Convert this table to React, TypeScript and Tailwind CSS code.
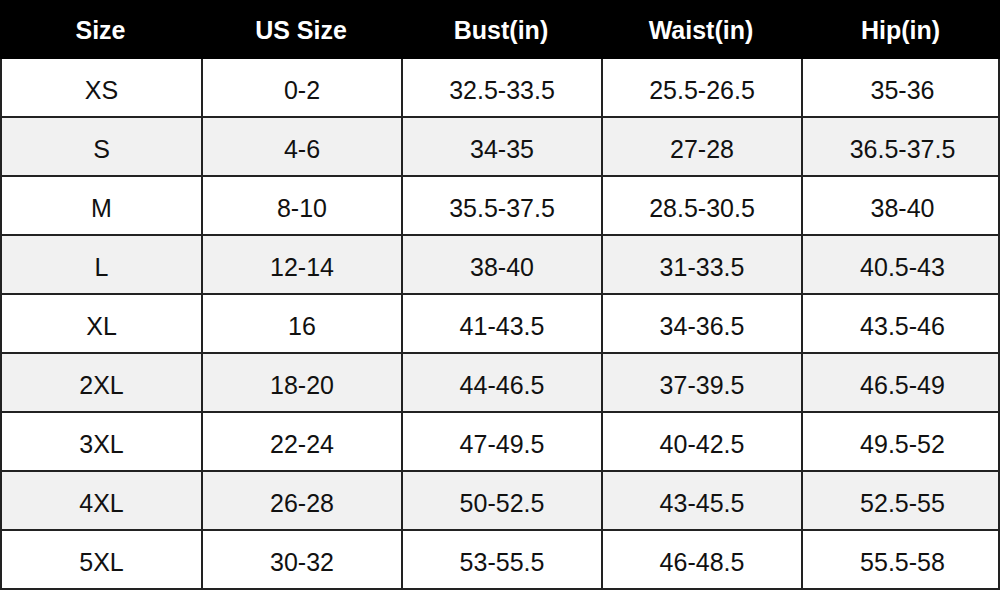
const headers = ["Size", "US Size", "Bust(in)", "Waist(in)", "Hip(in)"];

const rows: string[][] = [
  ["XS", "0-2", "32.5-33.5", "25.5-26.5", "35-36"],
  ["S", "4-6", "34-35", "27-28", "36.5-37.5"],
  ["M", "8-10", "35.5-37.5", "28.5-30.5", "38-40"],
  ["L", "12-14", "38-40", "31-33.5", "40.5-43"],
  ["XL", "16", "41-43.5", "34-36.5", "43.5-46"],
  ["2XL", "18-20", "44-46.5", "37-39.5", "46.5-49"],
  ["3XL", "22-24", "47-49.5", "40-42.5", "49.5-52"],
  ["4XL", "26-28", "50-52.5", "43-45.5", "52.5-55"],
  ["5XL", "30-32", "53-55.5", "46-48.5", "55.5-58"],
];

export default function App() {
  return (
    <div
      className="w-[1000px] h-[590px] bg-white overflow-hidden"
      style={{ fontFamily: '"Liberation Sans", Arial, sans-serif' }}
    >
      <div className="grid grid-cols-[201px_200px_200px_200px_199px] bg-black h-[59px]">
        {headers.map((h) => (
          <div key={h} className="flex items-center justify-center pt-[2px] text-white font-bold text-[25px]">
            {h}
          </div>
        ))}
      </div>
      {rows.map((row, i) => (
        <div
          key={row[0]}
          className={
            "grid grid-cols-[201px_200px_200px_200px_199px] h-[59px] border-l-2 border-r-2 border-b-2 border-[#222] " +
            (i % 2 === 1 ? "bg-[#f1f1f1]" : "bg-white")
          }
        >
          {row.map((cell, j) => (
            <div
              key={j}
              className={
                "flex items-center justify-center pt-[6px] text-[25px] text-[#111] " +
                (j < 4 ? "border-r-2 border-[#222]" : "")
              }
            >
              {cell}
            </div>
          ))}
        </div>
      ))}
    </div>
  );
}
